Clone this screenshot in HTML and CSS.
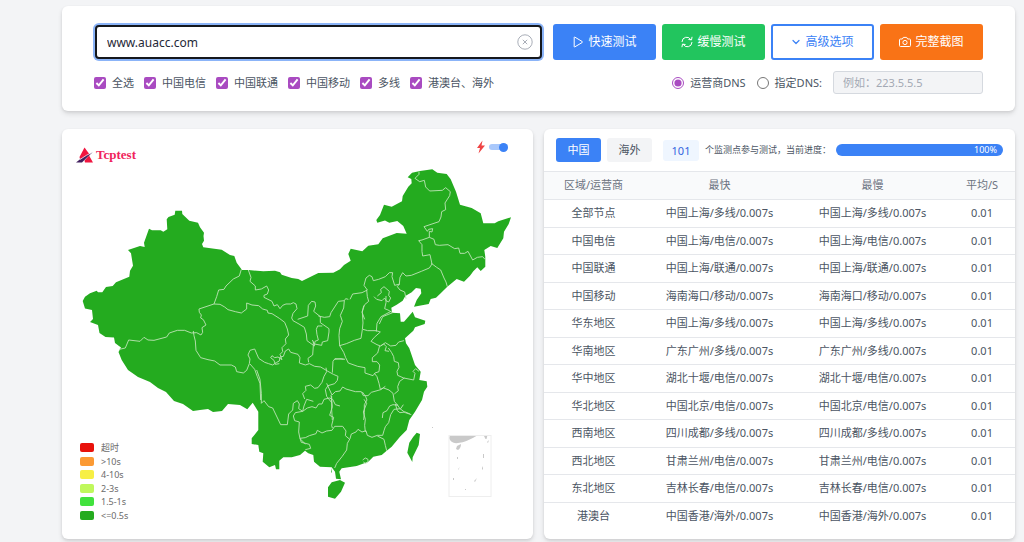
FILE: index.html
```html
<!DOCTYPE html>
<html lang="zh-CN">
<head>
<meta charset="utf-8">
<meta name="viewport" content="width=device-width, initial-scale=1">
<title>Tcptest</title>
<link rel="stylesheet" href="styles.css">
</head>
<body>
<main class="page">
  <form class="card search">
    <div class="search-row">
      <div class="url-box">
        <input class="url-input" type="text" value="www.auacc.com" aria-label="网址">
        <button class="clear" type="button" aria-label="清除">
          <svg viewBox="0 0 16 16" width="16" height="16" fill="none" stroke="#a9aeb8" stroke-width="1"><circle cx="8" cy="8" r="7.2"/><path d="M5.8 5.8l4.400 4.400M10.200 5.800l-4.400 4.400"/></svg>
        </button>
      </div>
      <div class="buttons">
        <button class="btn btn-blue" type="button">
          <svg viewBox="0 0 12 12" width="12" height="12" fill="none" stroke="currentColor" stroke-width="1" stroke-linejoin="round"><path d="M2.200 1.400v9.200q0 .6.6.3l7.400-4.400q.6-.5 0-1L2.800 1.100q-.6-.3-.6.3z"/></svg>
          快速测试
        </button>
        <button class="btn btn-green" type="button">
          <svg viewBox="0 0 12 12" width="12" height="12" fill="none" stroke="currentColor" stroke-width="1" stroke-linecap="round" stroke-linejoin="round"><path d="M1 5.600A4.700 4.700 0 0 1 9.800 3.600M11 1.200l-.5 2.700-2.700-.4M11 6.400A4.700 4.700 0 0 1 2.200 8.400M1 10.800l.5-2.700 2.700.4"/></svg>
          缓慢测试
        </button>
        <button class="btn btn-outline" type="button">
          <svg viewBox="0 0 10 12" width="10" height="12" fill="none" stroke="currentColor" stroke-width="1.200" stroke-linecap="round" stroke-linejoin="round"><path d="M2 4.500L5 7.500L8 4.500"/></svg>
          高级选项
        </button>
        <button class="btn btn-orange" type="button">
          <svg viewBox="0 0 12 12" width="12" height="12" fill="none" stroke="currentColor" stroke-width="1" stroke-linejoin="round"><path d="M1.400 3h2l.9-1.600h3.400L8.600 3h2q.9 0 .9.900v5.700q0 .900-.9.900H1.400q-.9 0-.9-.900V3.900q0-.9.9-.9z"/><circle cx="6" cy="6.500" r="2.100"/></svg>
          完整截图
        </button>
      </div>
    </div>
    <div class="options-row">
      <div class="checks">
        <label><input type="checkbox" checked>全选</label>
        <label><input type="checkbox" checked>中国电信</label>
        <label><input type="checkbox" checked>中国联通</label>
        <label><input type="checkbox" checked>中国移动</label>
        <label><input type="checkbox" checked>多线</label>
        <label><input type="checkbox" checked>港澳台、海外</label>
      </div>
      <div class="dns">
        <label><input type="radio" name="dns" checked>运营商DNS</label>
        <label><input type="radio" name="dns">指定DNS:</label>
        <input class="dns-input" type="text" placeholder="例如：223.5.5.5" aria-label="指定DNS" disabled>
      </div>
    </div>
  </form>

  <div class="columns">
    <section class="card map-card">
      <svg class="map" viewBox="62 129 471 410" role="img" aria-label="中国地图">
        <path fill="#24ab1f" d="M82.700 301L85 296.700L90 293.300L96.700 290.700L98 292.300L102.300 292.300L106 287L112.700 286L116 282.300L129.300 276.700L130 270.700L133 265.700L131 253.300L128 250L140 246L144.700 247L144 242.700L149 228.700L152 230.300L160.700 230.300L163.300 231.700L167.300 229.300L166.700 219.300L168.500 217L174.700 214.700L175.300 210.700H182L182.300 214L189.300 220.700L198 222.700L200 227.300L204 232.700L203.500 236L204 240.700L202 244L203.300 247.300L221.700 249.700L230 255L234.300 256L236.700 262.700L242 270H248.300L263.300 271.300L275 270.700L280 272.300L281.700 274.700L291.700 278L298.300 279L302 281L318.300 273L333.300 272.700L340 269.300L344 265L350.700 260.700L348.300 254L350.700 248.700L362.300 251.300L368.300 245.700L378.300 244.300L382.700 238.300L396.700 233L406.700 233.700L403.300 226L397.300 221L389.300 222.700L385 220.500L377.300 222.700L376.300 220L380 215L384 204.700L391.700 206.700L402 201.300L402.700 196L408.300 186.700L411.700 183.300L411.300 179L407.700 177.300L412 172.700L420 171L432.300 169.300L437.300 172.700L446.700 174L450.700 179.300L456 191.700L460 204.700L471.700 208L480.700 213.300L483.300 223.300L494.700 223.300L498.300 221.300L511 217.300L508.700 224L504 231.700L503.300 238.300L497.300 248L490.700 246L484.300 250L485.300 256.700V266.700L480.700 271L477.300 267.300L473.300 271.300L470 275.700L464 281.700L456.700 279L447.300 286.700L440.700 293.300L436 297.700L430.700 299L428.700 304L414 306.700L416.700 300L421.300 293.300L420.700 288.700L416 288L411.700 292.300L405.300 296L402.700 300.700L396.700 304.700L391.300 307.700L392 312.700L400 313.300L400.700 321.700H404L412.700 311.700L415 317.300L425.300 320.700L424.700 324L415 327.300L413.300 330.700L405 338.300L406 343.300L409.300 348.300L415 365L420.700 371.700L419.300 380L426.700 381.300L427.300 386.700L424 391.700L422 400L415 411.700L409.300 420L406.700 430L400 436.700L391.700 446.700L386.700 450.700L381.700 455L373.300 456.700L368.300 461.700L356.700 466L341.700 468.300L339.300 471.700L341 479.300L336 478.700L335 471.700L331.700 467.300L320 466.700L314 461.700L313.300 455L308.300 453.300L305 450.700L300 455L291.700 457.300L283.300 457.300L279.300 460.700V469.300H276L275 465L269.300 467.300L262.700 461.700L263.300 453.300L259.300 451.700L258.300 445L251.700 444V438.300L258.300 430V411.700L252.700 402.700L247.300 409.300L240 405L228 404L222 411L213 412L208 409L200 410L193 411L183 404L174 401L166 392L158 388L150 382L138 377L128 370L121.700 360L118.500 352L121 347.500L115 343L114 337.500L105.500 337L99.500 333L98 325L90 322L93 319L92 310L85 308.500Z"/>
        <path fill="#24ab1f" d="M331.700 482.300L340 480L345 482.700L341 491.700L335 498.700L328 496.700V487.300ZM416.700 432.700L420 434L418.700 445L412.700 457.300L412.300 462L407.300 452.700L409.300 442.700L413.300 436.700ZM331 468l1 5-1-1z"/>
        <g fill="none" stroke="#b9e2b2" stroke-width="2.800" stroke-linejoin="round">
          <g transform="translate(70 200) scale(.33333)">
            <path d="M514 208l-6 20-18 9-22 21-6 10-16 2-6 20-8 22-45 15 1 10 6 8-2 9 8 5 8 16-12 8 2 14-5 8-13-7-16 1-20-8h-22l-24 8-8 12-38 10-18-1-12-8-12 12-34-4-10 24-18 4"/>
            <path d="M370 393l2 14 4 16 2 28 14 22 22 6 20 4 16 12M432 312l18 1"/>
          </g>
          <g transform="translate(220 240) scale(.33333)">
            <path d="M85 90l8 22-3 12 16 14v12l18-3 16-9 6 12-4 12-10 4v6l24 12 6 14 10-4 8 12 8-10 10-4h14l8-4 8 4 3 14-12 14-4 14 4 8 18 10 16 10 6 20 2 20 22 16 2-14 10-4-4-16-2-16 4-10h14"/>
            <path d="M233 238l30-10 2-32 10-12 10 2 2 12-6 16 20 16v18l26 18v10l-4 26-16 4-2 10-22-4-6-12M295 228l18 4 16-2 4-12 22-34 18-2 4-6 8 2M373 182l-2 22-10 22 6 18-8 22-2 20 2 32"/>
            <path d="M0 193l14 8 10 8 22 6 18 4 16-12v-18l16 6 20 2 12 10 14 4 2 8 12 2 22 14 16 12 8 20 4 18-10 12 2 14-12 12 2 12-8 8 6 16-12-8-10 2-8-6-4 6 10 8 4 12 12-2"/>
            <path d="M0 375h34l12 6 4 14 20 4 10-8 8-20 2-14-6-12 6-14 14-4 12 28 18 12 12 4 12 4 12-8 8-4 2-12 10-2 6-16 10-6 6 10 22 6 6 10-2 16 18 6 12-4 16 8 18 2 20 12 18 10 14 6-2 12-8 10-20 6-8 12 4 20 16 20"/>
            <path d="M90 372l14 16 8 22 8 20 2 50M280 305v12l-2 28-14 10 2 12M318 383l2 12-8 14-6 18-12 16-10 2-12-10-16 4 2 12-10 10 6 16M337 398l2-34 6-8 26 2"/>
          </g>
          <g transform="translate(350 160) scale(.33333)">
            <path d="M207 35v8l-12 12 14 10 14-4 4 20 12 12 38-2 10-8 14 12-2 12-14 22 2 20-12 6-2 16-6 14-45 15 10 14 4-6 12-2-2 10-8-2v18l14 6 4 16 12 2 26-2 20 12 12-2 4 16h14l10-6 14 26 14-8 16-2 7 8"/>
            <path d="M238 232l-22 8-10 2 10 12v20l2 14 22-4 6 28-8 12-24 10-30 12-16 2-10-10-8 14-2 20-6 8 8 10 14 6 4 20M244 310l16 12 12 8 10 24 6 12 4 14"/>
            <path d="M0 418l8-16 28-4 16-8-10-14 6-22 10-8 8 4 4 12 16-4 20-8 12-12h10l-2 12 8 26 16-4M50 390l2 20 4 14-12 10-8 22 8 22M82 408l12-10-2-10 10-8 16 14-2 12 6 8-6 12-8-4-4-8-8 8-16-4-8-8M108 408v20l-4 18 10 4 14 8M128 458l-30 12-10 22"/>
          </g>
          <g transform="translate(300 290) scale(.33333)">
            <path d="M119 167l20-6 24-10 20-6 4-26 2-20-2-32 4-20M189 118l14 4h26l12 4-18 16-10 12 18 10 10 4 10-6 8 8-4 12 12 2"/>
            <path d="M229 125l2-25 12-20 30-16M119 167l12 20 6 16 8 16 28 10 22 4v16l24 8 6-8 12-4 2-20-8-10h-14v-12l16-14 6-22M242 168l14-10 16 10 16-2 8-10 16-4M265 174l10 14 6 12 2 14 12 4 2 14-6 12 2 12 18 8 30 6 4-20-6-6 8-8 10 8"/>
            <path d="M103 208l20-2 12 2M223 250l8 10 6 20 4 18 10-4 16 6 12 10 4 24 10 12-14-2-10 4-8 14-12 6-2 16M313 264l-14 10-6 16 2 12-12 10M290 342l10 14 16 12 12 4 6 2M95 318v40l2 32M80 280l16 35 10-10 14-2 8-12 10 6 28 8h18l6 12h14l10-10 28-8 14-10M187 306l10 14 4 10-8 14v24l-2 22"/>
          </g>
          <g transform="translate(240 370) scale(.33333)">
            <path d="M50 0l10 28 4 42v30l8-8 14 18 12 4 24 50h20l4-32 12-12 2-20 12-8 6 10-2 14 12 8 14-10 14-4 12 4 8-12h10l6-14 16-4 10 4 8 16 14 4M220 94l-20-6-8 20-4 16-22 4-6 10 4 14 14 4-2 30 4 20 16 16"/>
            <path d="M180 205l16-2 12-6 20-6 4-10 14 8 14-6 16-2 8-12h24l10 14-2 14 12 10M273 75l4 35-8 26 12 6-6 24 2 8M180 205l4 12 24 6 4 12-16 4M330 206l-8 14-2 20-14 20-16 20-6 14M330 206l4-14 14-6 6-8 12 8 12-4 4 14 14 6 16-6h16l4-14 4-12 10-12 6-24 10-16 20-2 8-12M412 198l20 10 4 18 4 16M372 88l8 12-10 26 6 22-2 18 2 20M466 102l6 20 8 6 16-2 14 6M368 270l8-6 8 4v8l-8 4-6-4"/>
          </g>
        </g>
        <g fill="#c9c9c9">
          <path d="M450 435h28q-11 7-20 8-7 1-9-5zM483.500 435h4l-1 4h-1zM457 446l4-2q0 4-3 6l-2-1zM483 454h1v4h-1zM457 457h1v2h-1zM482 468l1-2v3l-1 1zM458 469l2-2-2 3zM474 481l3-3-2 4zM453 478h1v2h-1zM465 489h1v1h-1zM487 442l2-2-1 3z"/>
          <path d="M432 427h1v1h-1z"/>
        </g>
        <rect x="449" y="435.500" width="42" height="61" fill="none" stroke="#eeeeee"/>
      </svg>
      <div class="brand">
        <svg viewBox="0 0 18 16" width="18" height="16"><path fill="#f01640" d="M8.500.5L14 8 4 12 3.500 10z"/><path fill="#f01640" d="M8.500 13.500L13 8.500l4 7H9z"/><path fill="#42205f" d="M0 15.500L5 11.500 17 5Q11 10 6 15.500z"/><path stroke="#fff" stroke-width=".7" fill="none" d="M4 12.500Q10 8 18 4.500"/></svg>
        <span>Tcptest</span>
      </div>
      <label class="speed" aria-label="动画">
        <svg viewBox="0 0 8 14" width="8" height="14"><path fill="#ef4444" d="M5.500.5L0 8h3L1.500 13.500 8 5.500H4.500z"/></svg>
        <input class="switch" type="checkbox" checked>
      </label>
      <ul class="legend">
        <li><i class="swatch red"></i>超时</li>
        <li><i class="swatch orange"></i>&gt;10s</li>
        <li><i class="swatch yellow"></i>4-10s</li>
        <li><i class="swatch lime"></i>2-3s</li>
        <li><i class="swatch green"></i>1.5-1s</li>
        <li><i class="swatch dark"></i>&lt;=0.5s</li>
      </ul>
    </section>

    <section class="card results">
      <header class="results-head">
        <div class="tabs">
          <button class="tab active" type="button">中国</button>
          <button class="tab" type="button">海外</button>
        </div>
        <span class="count">101</span>
        <span class="note">个监测点参与测试，当前进度：</span>
        <div class="progress" role="progressbar" aria-valuenow="100" aria-label="当前进度">100%</div>
      </header>
      <table>
        <colgroup><col class="c-area"><col class="c-node"><col class="c-node"><col class="c-avg"></colgroup>
        <thead><tr><th>区域/运营商</th><th>最快</th><th>最慢</th><th>平均/S</th></tr></thead>
        <tbody>
          <tr><td>全部节点</td><td>中国上海/多线/0.007s</td><td>中国上海/多线/0.007s</td><td>0.01</td></tr>
          <tr><td>中国电信</td><td>中国上海/电信/0.007s</td><td>中国上海/电信/0.007s</td><td>0.01</td></tr>
          <tr><td>中国联通</td><td>中国上海/联通/0.007s</td><td>中国上海/联通/0.007s</td><td>0.01</td></tr>
          <tr><td>中国移动</td><td>海南海口/移动/0.007s</td><td>海南海口/移动/0.007s</td><td>0.01</td></tr>
          <tr><td>华东地区</td><td>中国上海/多线/0.007s</td><td>中国上海/多线/0.007s</td><td>0.01</td></tr>
          <tr><td>华南地区</td><td>广东广州/多线/0.007s</td><td>广东广州/多线/0.007s</td><td>0.01</td></tr>
          <tr><td>华中地区</td><td>湖北十堰/电信/0.007s</td><td>湖北十堰/电信/0.007s</td><td>0.01</td></tr>
          <tr><td>华北地区</td><td>中国北京/电信/0.007s</td><td>中国北京/电信/0.007s</td><td>0.01</td></tr>
          <tr><td>西南地区</td><td>四川成都/多线/0.007s</td><td>四川成都/多线/0.007s</td><td>0.01</td></tr>
          <tr><td>西北地区</td><td>甘肃兰州/电信/0.007s</td><td>甘肃兰州/电信/0.007s</td><td>0.01</td></tr>
          <tr><td>东北地区</td><td>吉林长春/电信/0.007s</td><td>吉林长春/电信/0.007s</td><td>0.01</td></tr>
          <tr><td>港澳台</td><td>中国香港/海外/0.007s</td><td>中国香港/海外/0.007s</td><td>0.01</td></tr>
        </tbody>
      </table>
    </section>
  </div>
</main>
</body>
</html>
```
FILE: styles.css
```css
* { box-sizing: border-box; }
body {
  margin: 0;
  background: #f3f4f6;
  color: #4b5563;
  font: 11px/16px "Noto Sans", "Noto Sans CJK SC", sans-serif;
}
button, input { font: inherit; margin: 0; }
.page {
  display: flex;
  flex-direction: column;
  gap: 18px;
  padding: 6px 9px 3px 62px;
}
.card {
  background: #fff;
  border-radius: 6px;
  box-shadow: 0 3px 5px rgba(0, 0, 0, .1), 0 1px 3px rgba(0, 0, 0, .08);
}

.search {
  display: flex;
  flex-direction: column;
  gap: 11px;
  padding: 18px 32px 17px;
}
.search-row { display: flex; gap: 10px; }
.url-box { position: relative; flex: 1; display: flex; }
.url-input {
  width: 100%;
  height: 34px;
  margin: 1px;
  padding: 0 36px 0 10px;
  border: 2px solid #15181d;
  border-radius: 4px;
  outline: none;
  box-shadow: 0 0 0 2px #8bb4f8;
  background: #fff;
  color: #1f2937;
  font-size: 12px;
}
.clear {
  position: absolute;
  top: 0;
  bottom: 0;
  right: 10px;
  display: flex;
  align-items: center;
  padding: 0;
  border: 0;
  background: none;
}
.buttons { display: grid; grid-template-columns: repeat(4, 103px); gap: 6px; }
.btn {
  display: flex;
  align-items: center;
  justify-content: center;
  gap: 4px;
  height: 36px;
  padding: 0;
  border: 0;
  border-radius: 3px;
  color: #fff;
  font-size: 12px;
}
.btn-blue { background: #3b82f6; }
.btn-green { background: #22c55e; }
.btn-orange { background: #f97316; }
.btn-outline { background: #fff; border: 2px solid #3b82f6; color: #3b82f6; }

.options-row { display: flex; align-items: center; justify-content: space-between; }
.checks { display: flex; gap: 10px; }
.checks label, .dns label { display: flex; align-items: center; gap: 6px; }
.checks input, .dns input[type="radio"] { width: 12px; height: 12px; accent-color: #a94bc1; }
.dns { display: flex; align-items: center; gap: 11px; }
.dns-input {
  width: 150px;
  height: 23px;
  padding: 0 9px;
  border: 1px solid #d5d9df;
  border-radius: 3px;
  background: #f3f4f6;
}
.dns-input::placeholder { color: #a3a9b4; }

.columns { display: grid; grid-template-columns: 1fr 1fr; gap: 11px; }
.map-card { position: relative; }
.map { display: block; width: 100%; }
.brand {
  position: absolute;
  top: 17px;
  left: 14px;
  display: flex;
  align-items: center;
  gap: 2px;
  color: #f0245c;
  font: bold 13px/18px "Liberation Serif", serif;
}
.speed {
  position: absolute;
  top: 11px;
  right: 25px;
  display: flex;
  align-items: center;
  gap: 4px;
}
.switch {
  appearance: none;
  display: flex;
  align-items: center;
  justify-content: flex-end;
  width: 19px;
  height: 6px;
  border-radius: 3px;
  background: #a9c8fb;
}
.switch::before {
  content: "";
  width: 9px;
  height: 9px;
  flex: none;
  border-radius: 50%;
  background: #3b82f6;
}
.legend {
  position: absolute;
  left: 18px;
  bottom: 17px;
  display: flex;
  flex-direction: column;
  justify-content: space-between;
  height: 81px;
  margin: 0;
  padding: 0;
  list-style: none;
  color: #6b6b6b;
  font-size: 9px;
  line-height: 13px;
}
.legend li { display: flex; align-items: center; gap: 7px; }
.swatch { width: 14px; height: 9px; border-radius: 2px; }
.red { background: #e8120c; }
.orange { background: #fb9a34; }
.yellow { background: #f7ef44; }
.lime { background: #bff85c; }
.green { background: #41e23d; }
.dark { background: #24ab1f; }

.results { overflow: hidden; }
.results-head {
  display: flex;
  align-items: center;
  height: 42px;
  padding: 0 12px;
}
.tabs { display: flex; gap: 6px; margin-right: 11px; }
.tab {
  width: 45px;
  height: 24px;
  padding: 0;
  border: 0;
  border-radius: 3px;
  background: #f3f4f6;
  color: #4b5563;
}
.tab.active { background: #3b82f6; color: #fff; }
.count {
  width: 36px;
  margin-right: 6px;
  border-radius: 3px;
  background: #eff6ff;
  color: #3565e0;
  line-height: 21px;
  text-align: center;
}
.note { margin-right: 5px; font-size: 9px; white-space: nowrap; }
.progress {
  flex: 1;
  padding-right: 6px;
  border-radius: 6px;
  background: #3b82f6;
  color: #fff;
  font-size: 9px;
  line-height: 12px;
  text-align: right;
}
table { width: 100%; border-collapse: collapse; table-layout: fixed; text-align: center; }
.c-area { width: 21%; }
.c-node { width: 32.5%; }
.c-avg { width: 14%; }
th, td { height: 28px; padding: 0 0 1px; border-top: 1px solid #e5e7eb; white-space: nowrap; }
th { background: #f9fafb; color: #6b7280; font-weight: 400; }
tbody tr:nth-child(even) td { height: 27px; }
```
